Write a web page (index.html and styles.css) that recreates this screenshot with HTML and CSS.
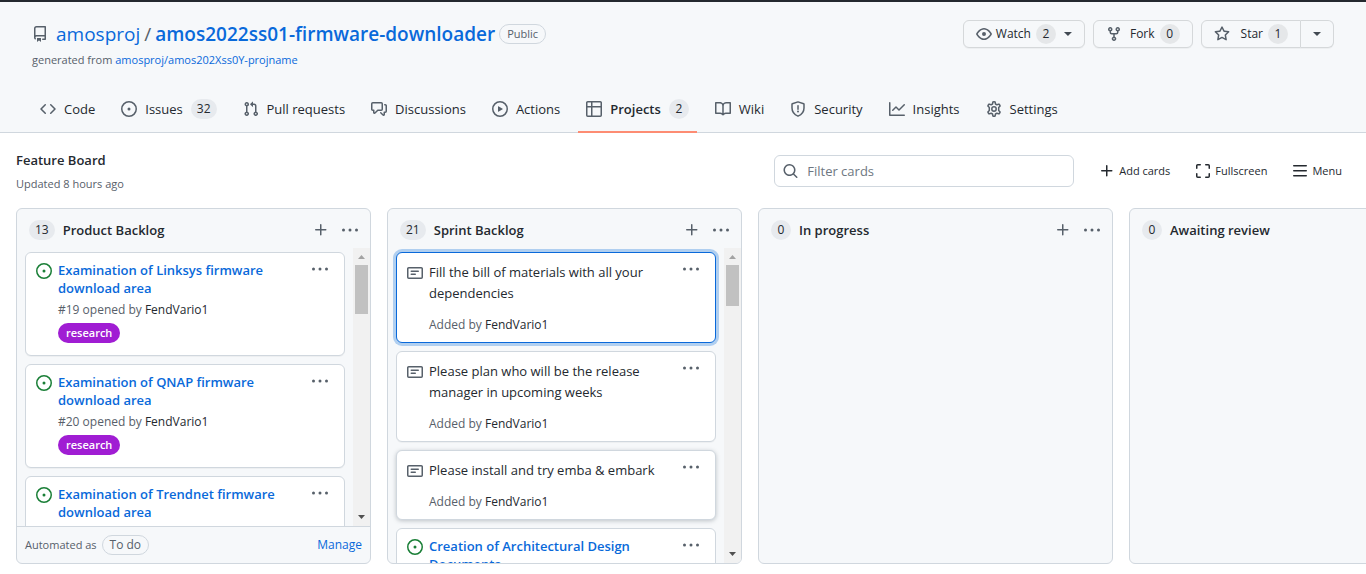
FILE: index.html
```html
<!DOCTYPE html>
<html lang="en">
<head>
<meta charset="utf-8">
<title>Feature Board</title>
<link rel="stylesheet" href="styles.css">
</head>
<body>
<svg class="sprite" aria-hidden="true">
  <symbol id="repo" viewBox="0 0 16 16"><path fill-rule="evenodd" d="M2 2.5A2.5 2.5 0 014.5 0h8.75a.75.75 0 01.75.75v12.5a.75.75 0 01-.75.75h-2.5a.75.75 0 110-1.5h1.75v-2h-8a1 1 0 00-.714 1.7.75.75 0 01-1.072 1.05A2.495 2.495 0 012 11.5v-9zm10.5-1V9h-8c-.356 0-.694.074-1 .208V2.5a1 1 0 011-1h8zM5 12.25v3.25a.25.25 0 00.4.2l1.45-1.087a.25.25 0 01.3 0L8.6 15.7a.25.25 0 00.4-.2v-3.25a.25.25 0 00-.25-.25h-3.5a.25.25 0 00-.25.25z"/></symbol>
  <symbol id="eye" viewBox="0 0 16 16"><path fill-rule="evenodd" d="M1.679 7.932c.412-.621 1.242-1.75 2.366-2.717C5.175 4.242 6.527 3.5 8 3.5c1.473 0 2.824.742 3.955 1.715 1.124.967 1.954 2.096 2.366 2.717a.119.119 0 010 .136c-.412.621-1.242 1.75-2.366 2.717C10.825 11.758 9.473 12.5 8 12.5c-1.473 0-2.824-.742-3.955-1.715C2.92 9.818 2.09 8.69 1.679 8.068a.119.119 0 010-.136zM8 2c-1.981 0-3.67.992-4.933 2.078C1.797 5.169.88 6.423.43 7.1a1.619 1.619 0 000 1.798c.45.678 1.367 1.932 2.637 3.024C4.329 13.008 6.019 14 8 14c1.981 0 3.67-.992 4.933-2.078 1.27-1.091 2.187-2.345 2.637-3.023a1.619 1.619 0 000-1.798c-.45-.678-1.367-1.932-2.637-3.023C11.671 2.992 9.981 2 8 2zm0 8a2 2 0 100-4 2 2 0 000 4z"/></symbol>
  <symbol id="fork" viewBox="0 0 16 16"><path fill-rule="evenodd" d="M5 3.25a.75.75 0 11-1.5 0 .75.75 0 011.5 0zm0 2.122a2.25 2.25 0 10-1.5 0v.878A2.25 2.25 0 005.75 8.5h1.5v2.128a2.251 2.251 0 101.5 0V8.5h1.5a2.25 2.25 0 002.25-2.25v-.878a2.25 2.25 0 10-1.5 0v.878a.75.75 0 01-.75.75h-4.5A.75.75 0 015 6.25v-.878zm3.75 7.378a.75.75 0 11-1.5 0 .75.75 0 011.5 0zm3-8.75a.75.75 0 100-1.5.75.75 0 000 1.5z"/></symbol>
  <symbol id="star" viewBox="0 0 16 16"><path fill-rule="evenodd" d="M8 .25a.75.75 0 01.673.418l1.882 3.815 4.21.612a.75.75 0 01.416 1.279l-3.046 2.97.719 4.192a.75.75 0 01-1.088.791L8 12.347l-3.766 1.98a.75.75 0 01-1.088-.79l.72-4.194L.818 6.374a.75.75 0 01.416-1.28l4.21-.611L7.327.668A.75.75 0 018 .25zm0 2.445L6.615 5.5a.75.75 0 01-.564.41l-3.097.45 2.24 2.184a.75.75 0 01.216.664l-.528 3.084 2.769-1.456a.75.75 0 01.698 0l2.77 1.456-.53-3.084a.75.75 0 01.216-.664l2.24-2.183-3.096-.45a.75.75 0 01-.564-.41L8 2.694v.001z"/></symbol>
  <symbol id="code" viewBox="0 0 16 16"><path fill-rule="evenodd" d="M4.72 3.22a.75.75 0 011.06 1.06L2.06 8l3.72 3.72a.75.75 0 11-1.06 1.06L.47 8.53a.75.75 0 010-1.06l4.25-4.25zm6.56 0a.75.75 0 10-1.06 1.06L13.94 8l-3.72 3.72a.75.75 0 101.06 1.06l4.25-4.25a.75.75 0 000-1.06l-4.25-4.25z"/></symbol>
  <symbol id="issue" viewBox="0 0 16 16"><path d="M8 9.5a1.5 1.5 0 100-3 1.5 1.5 0 000 3z"/><path fill-rule="evenodd" d="M8 0a8 8 0 100 16A8 8 0 008 0zM1.5 8a6.5 6.5 0 1113 0 6.5 6.5 0 01-13 0z"/></symbol>
  <symbol id="pull" viewBox="0 0 16 16"><path fill-rule="evenodd" d="M7.177 3.073L9.573.677A.25.25 0 0110 .854v4.792a.25.25 0 01-.427.177L7.177 3.427a.25.25 0 010-.354zM3.75 2.5a.75.75 0 100 1.5.75.75 0 000-1.5zm-2.25.75a2.25 2.25 0 113 2.122v5.256a2.251 2.251 0 11-1.5 0V5.372A2.25 2.25 0 011.5 3.25zM11 2.5h-1V4h1a1 1 0 011 1v5.628a2.251 2.251 0 101.5 0V5A2.5 2.5 0 0011 2.5zm1 10.25a.75.75 0 111.5 0 .75.75 0 01-1.5 0zM3.75 12a.75.75 0 100 1.5.75.75 0 000-1.5z"/></symbol>
  <symbol id="discussion" viewBox="0 0 16 16"><path fill-rule="evenodd" d="M1.5 2.75a.25.25 0 01.25-.25h8.5a.25.25 0 01.25.25v5.5a.25.25 0 01-.25.25h-3.5a.75.75 0 00-.53.22L3.5 11.44V9.25a.75.75 0 00-.75-.75h-1a.25.25 0 01-.25-.25v-5.5zM1.75 1A1.75 1.75 0 000 2.75v5.5C0 9.216.784 10 1.75 10H2v1.543a1.457 1.457 0 002.487 1.03L7.061 10h3.189A1.75 1.75 0 0012 8.25v-5.5A1.75 1.75 0 0010.25 1h-8.5zM14.5 4.75a.25.25 0 00-.25-.25h-.5a.75.75 0 110-1.5h.5c.966 0 1.75.784 1.75 1.75v5.5A1.75 1.75 0 0114.25 12H14v1.543a1.457 1.457 0 01-2.487 1.03L9.22 12.28a.75.75 0 111.06-1.06l2.22 2.22v-2.19a.75.75 0 01.75-.75h1a.25.25 0 00.25-.25v-5.5z"/></symbol>
  <symbol id="play" viewBox="0 0 16 16"><path fill-rule="evenodd" d="M1.5 8a6.5 6.5 0 1113 0 6.5 6.5 0 01-13 0zM8 0a8 8 0 100 16A8 8 0 008 0zM6.379 5.227A.25.25 0 006 5.442v5.117a.25.25 0 00.379.214l4.264-2.559a.25.25 0 000-.428L6.379 5.227z"/></symbol>
  <symbol id="table" viewBox="0 0 16 16"><path fill-rule="evenodd" d="M0 1.75C0 .784.784 0 1.75 0h12.5C15.216 0 16 .784 16 1.75v12.5A1.75 1.75 0 0114.25 16H1.75A1.75 1.75 0 010 14.25V1.75zM1.5 6.5v7.75c0 .138.112.25.25.25H5v-8H1.500zM5 5H1.5V1.75a.25.25 0 01.25-.25H5V5zm1.500 1.500v8h7.750a.25.25 0 00.25-.25V6.500h-8zm8-1.500h-8V1.500h7.750a.25.25 0 01.25.25V5z"/></symbol>
  <symbol id="book" viewBox="0 0 16 16"><path fill-rule="evenodd" d="M0 1.75A.75.75 0 01.75 1h4.253c1.227 0 2.317.59 3 1.501A3.744 3.744 0 0111.006 1h4.245a.75.75 0 01.75.75v10.5a.75.75 0 01-.75.75h-4.507a2.25 2.25 0 00-1.591.659l-.622.621a.75.75 0 01-1.06 0l-.622-.621A2.25 2.25 0 005.258 13H.75a.75.75 0 01-.75-.75V1.750zm8.755 3a2.25 2.25 0 012.25-2.25H14.500v9h-3.757c-.71 0-1.400.201-1.992.572l.004-7.322zm-1.504 7.324l.004-5.073-.002-2.253A2.250 2.250 0 005.003 2.500H1.500v9h3.757a3.750 3.750 0 011.994.574z"/></symbol>
  <symbol id="shield" viewBox="0 0 16 16"><path fill="none" stroke="currentColor" stroke-width="1.500" stroke-linejoin="round" d="M8 .9l5.700 1.850a.5.5 0 01.3.500V7c0 3.700-2 6.500-6 8.150C4 13.500 2 10.700 2 7V3.250a.5.5 0 01.3-.500z"/><path fill="none" stroke="currentColor" stroke-width="1.500" stroke-linecap="round" d="M8 4.750v3.500"/><circle cx="8" cy="10.500" r="1"/></symbol>
  <symbol id="graph" viewBox="0 0 16 16"><path fill-rule="evenodd" d="M1.500 1.750a.75.75 0 00-1.500 0v12.500c0 .414.336.75.75.75h14.500a.75.75 0 000-1.500H1.500V1.750zm14.280 2.530a.75.75 0 00-1.060-1.060L10 7.940 7.530 5.470a.75.75 0 00-1.060 0L3.220 8.720a.75.75 0 001.060 1.060L7 7.060l2.470 2.470a.75.75 0 001.060 0l5.250-5.250z"/></symbol>
  <symbol id="gear" viewBox="0 0 16 16"><path fill="none" stroke="currentColor" stroke-width="1.500" stroke-linejoin="round" d="M6.900 1Q8 .6 9.100 1L9.500 3 10.900 3.800 12.900 3.100Q13.800 3.900 14.100 5L12.700 6.500V9.500L14.100 11Q13.800 12.100 12.900 12.900L10.900 12.200 9.500 13 9.100 15Q8 15.400 6.900 15L6.500 13 5.100 12.200 3.100 12.900Q2.200 12.100 1.900 11L3.300 9.500V6.500L1.900 5Q2.200 3.900 3.100 3.100L5.100 3.800 6.500 3z"/><circle cx="8" cy="8" r="2.200" fill="none" stroke="currentColor" stroke-width="1.500"/></symbol>
  <symbol id="note" viewBox="0 0 16 16"><path fill-rule="evenodd" d="M0 3.750C0 2.784.784 2 1.750 2h12.500c.966 0 1.750.784 1.750 1.750v8.500A1.750 1.750 0 0114.250 14H1.750A1.750 1.750 0 010 12.250v-8.500zm1.750-.25a.25.25 0 00-.25.25v8.500c0 .138.112.25.25.25h12.500a.25.25 0 00.25-.25v-8.500a.25.25 0 00-.25-.25H1.750zM3.500 6.250a.75.75 0 01.75-.75h7a.75.75 0 010 1.500h-7a.75.75 0 01-.75-.75zm.75 2.250a.75.75 0 000 1.500h4a.75.75 0 000-1.500h-4z"/></symbol>
  <symbol id="plus" viewBox="0 0 16 16"><path fill-rule="evenodd" d="M7.750 2a.75.75 0 01.75.75V7h4.250a.75.75 0 110 1.500H8.500v4.250a.75.75 0 11-1.500 0V8.500H2.750a.75.75 0 010-1.500H7V2.750A.75.75 0 017.750 2z"/></symbol>
  <symbol id="dots" viewBox="0 0 16 16"><circle cx="1.500" cy="8" r="1.500"/><circle cx="8" cy="8" r="1.500"/><circle cx="14.500" cy="8" r="1.500"/></symbol>
  <symbol id="search" viewBox="0 0 16 16"><path fill-rule="evenodd" d="M11.500 7a4.499 4.499 0 11-8.998 0A4.499 4.499 0 0111.500 7zm-.820 4.740a6 6 0 111.060-1.060l3.040 3.040a.75.75 0 11-1.060 1.060l-3.040-3.040z" transform="translate(-.5 0)"/></symbol>
  <symbol id="full" viewBox="0 0 16 16"><path fill="none" stroke="currentColor" stroke-width="1.500" stroke-linecap="round" d="M1.750 5.250V2.750a1 1 0 011-1h2.500M10.750 1.750h2.500a1 1 0 011 1v2.500M14.250 10.750v2.500a1 1 0 01-1 1h-2.500M5.250 14.250h-2.500a1 1 0 01-1-1v-2.500"/></symbol>
  <symbol id="bars" viewBox="0 0 16 16"><path fill="none" stroke="currentColor" stroke-width="1.500" stroke-linecap="round" d="M1.750 2.750h12.500M1.750 7.750h12.500M1.750 12.750h12.500"/></symbol>
</svg>

<header class="repo-header">
  <div class="repo-top">
    <div class="repo-name">
      <h1 class="repo-title">
        <svg class="icon"><use href="#repo"/></svg>
        <a href="#">amosproj</a><span class="slash">/</span><a class="strong" href="#">amos2022ss01-firmware-downloader</a>
        <span class="pill">Public</span>
      </h1>
      <p class="generated">generated from <a href="#">amosproj/amos202Xss0Y-projname</a></p>
    </div>
    <div class="repo-actions">
      <button class="btn watch"><svg class="icon"><use href="#eye"/></svg>Watch<span class="count">2</span><span class="caret"></span></button>
      <button class="btn"><svg class="icon"><use href="#fork"/></svg>Fork<span class="count">0</span></button>
      <div class="btn-group">
        <button class="btn"><svg class="icon"><use href="#star"/></svg>Star<span class="count">1</span></button>
        <button class="btn" aria-label="Star lists"><span class="caret"></span></button>
      </div>
    </div>
  </div>
  <nav class="tabs">
    <a class="tab" href="#"><svg class="icon"><use href="#code"/></svg>Code</a>
    <a class="tab" href="#"><svg class="icon"><use href="#issue"/></svg>Issues<span class="count">32</span></a>
    <a class="tab" href="#"><svg class="icon"><use href="#pull"/></svg>Pull requests</a>
    <a class="tab" href="#"><svg class="icon"><use href="#discussion"/></svg>Discussions</a>
    <a class="tab" href="#"><svg class="icon"><use href="#play"/></svg>Actions</a>
    <a class="tab selected" href="#"><svg class="icon"><use href="#table"/></svg>Projects<span class="count">2</span></a>
    <a class="tab" href="#"><svg class="icon"><use href="#book"/></svg>Wiki</a>
    <a class="tab" href="#"><svg class="icon"><use href="#shield"/></svg>Security</a>
    <a class="tab" href="#"><svg class="icon"><use href="#graph"/></svg>Insights</a>
    <a class="tab" href="#"><svg class="icon"><use href="#gear"/></svg>Settings</a>
  </nav>
</header>

<div class="project-bar">
  <div class="project-name">
    <h2>Feature Board</h2>
    <p>Updated 8 hours ago</p>
  </div>
  <div class="project-tools">
    <label class="filter"><svg class="icon"><use href="#search"/></svg><input type="text" placeholder="Filter cards" aria-label="Filter cards"></label>
    <button class="tool"><svg class="icon"><use href="#plus"/></svg>Add cards</button>
    <button class="tool"><svg class="icon"><use href="#full"/></svg>Fullscreen</button>
    <button class="tool"><svg class="icon"><use href="#bars"/></svg>Menu</button>
  </div>
</div>

<main class="board">
  <section class="column">
    <div class="column-head"><span class="count">13</span><h3>Product Backlog</h3>
      <button class="icon-btn" aria-label="Add a note"><svg class="icon"><use href="#plus"/></svg></button><button class="icon-btn" aria-label="Column menu"><svg class="icon"><use href="#dots"/></svg></button></div>
    <div class="column-body">
      <div class="cards">
        <article class="card"><svg class="icon open"><use href="#issue"/></svg>
          <div class="card-text"><a class="issue-title" href="#">Examination of Linksys firmware download area</a><p class="meta">#19 opened by <a href="#">FendVario1</a></p><a class="label" href="#">research</a></div>
          <button class="icon-btn" aria-label="Card menu"><svg class="icon"><use href="#dots"/></svg></button></article>
        <article class="card"><svg class="icon open"><use href="#issue"/></svg>
          <div class="card-text"><a class="issue-title" href="#">Examination of QNAP firmware download area</a><p class="meta">#20 opened by <a href="#">FendVario1</a></p><a class="label" href="#">research</a></div>
          <button class="icon-btn" aria-label="Card menu"><svg class="icon"><use href="#dots"/></svg></button></article>
        <article class="card last"><svg class="icon open"><use href="#issue"/></svg>
          <div class="card-text"><a class="issue-title" href="#">Examination of Trendnet firmware download area</a></div>
          <button class="icon-btn" aria-label="Card menu"><svg class="icon"><use href="#dots"/></svg></button></article>
      </div>
      <div class="scrollbar"><span class="arrow up"></span><span class="thumb"></span><span class="arrow down"></span></div>
    </div>
    <div class="column-foot"><span>Automated as</span><span class="pill">To do</span><a href="#">Manage</a></div>
  </section>

  <section class="column">
    <div class="column-head"><span class="count">21</span><h3>Sprint Backlog</h3>
      <button class="icon-btn" aria-label="Add a note"><svg class="icon"><use href="#plus"/></svg></button><button class="icon-btn" aria-label="Column menu"><svg class="icon"><use href="#dots"/></svg></button></div>
    <div class="column-body">
      <div class="cards">
        <article class="card note focused"><svg class="icon"><use href="#note"/></svg>
          <div class="card-text"><p class="note-text">Fill the bill of materials with all your dependencies</p><p class="meta">Added by <a href="#">FendVario1</a></p></div>
          <button class="icon-btn" aria-label="Card menu"><svg class="icon"><use href="#dots"/></svg></button></article>
        <article class="card note"><svg class="icon"><use href="#note"/></svg>
          <div class="card-text"><p class="note-text">Please plan who will be the release manager in upcoming weeks</p><p class="meta">Added by <a href="#">FendVario1</a></p></div>
          <button class="icon-btn" aria-label="Card menu"><svg class="icon"><use href="#dots"/></svg></button></article>
        <article class="card note hovered"><svg class="icon"><use href="#note"/></svg>
          <div class="card-text"><p class="note-text">Please install and try emba &amp; embark</p><p class="meta">Added by <a href="#">FendVario1</a></p></div>
          <button class="icon-btn" aria-label="Card menu"><svg class="icon"><use href="#dots"/></svg></button></article>
        <article class="card last"><svg class="icon open"><use href="#issue"/></svg>
          <div class="card-text"><a class="issue-title" href="#">Creation of Architectural Design Documents</a></div>
          <button class="icon-btn" aria-label="Card menu"><svg class="icon"><use href="#dots"/></svg></button></article>
      </div>
      <div class="scrollbar"><span class="arrow up"></span><span class="thumb short"></span><span class="arrow down"></span></div>
    </div>
  </section>

  <section class="column">
    <div class="column-head"><span class="count">0</span><h3>In progress</h3>
      <button class="icon-btn" aria-label="Add a note"><svg class="icon"><use href="#plus"/></svg></button><button class="icon-btn" aria-label="Column menu"><svg class="icon"><use href="#dots"/></svg></button></div>
  </section>

  <section class="column">
    <div class="column-head"><span class="count">0</span><h3>Awaiting review</h3></div>
  </section>
</main>
</body>
</html>
```
FILE: styles.css
```css
* { box-sizing: border-box; }
body {
  margin: 0;
  height: 100vh;
  display: flex;
  flex-direction: column;
  overflow: hidden;
  border-top: 2px solid #24292f;
  background: #fff;
  color: #24292f;
  font: 13px/20px "Open Sans", "Noto Sans", sans-serif;
}
h1, h2, h3, p { margin: 0; font: inherit; }
a { color: #0969da; text-decoration: none; }
button { font: inherit; color: inherit; cursor: pointer; }
.sprite { display: none; }
.icon { width: 16px; height: 16px; flex: none; fill: currentColor; color: #57606a; }

.count {
  min-width: 20px;
  height: 20px;
  padding: 0 6px;
  border-radius: 10px;
  background: #e7eaee;
  font-size: 12px;
  font-weight: 500;
  text-align: center;
}
.pill {
  padding: 0 7px;
  border: 1px solid #d0d7de;
  border-radius: 10px;
  color: #57606a;
  font-size: 11px;
  font-weight: 500;
  line-height: 18px;
}
.caret {
  width: 8px;
  height: 4px;
  background: #424a53;
  clip-path: polygon(0 0, 100% 0, 50% 100%);
}

.repo-header { background: #f6f8fa; border-bottom: 1px solid #d0d7de; }
.repo-top {
  display: flex;
  justify-content: space-between;
  align-items: flex-start;
  padding: 16px 32px 0;
}
.repo-title { display: flex; align-items: center; font-size: 19px; line-height: 32px; }
.repo-title .icon { margin-right: 8px; }
.repo-title .strong { font-weight: 600; }
.repo-title .pill { margin-left: 4px; }
.slash { margin: 0 4px; color: #57606a; }
.generated { color: #57606a; font-size: 11px; line-height: 20px; }
.repo-actions { display: flex; gap: 8px; padding-top: 2px; }
.btn {
  display: flex;
  align-items: center;
  height: 28px;
  padding: 0 12px;
  border: 1px solid #d5d8da;
  border-radius: 6px;
  background: #f6f8fa;
  box-shadow: 0 1px 0 rgba(27, 31, 36, .04);
  font-size: 12px;
  font-weight: 500;
}
.btn .icon { margin-right: 8px; }
.btn .count { margin-left: 5px; background: #e5e7e9; }
.watch .icon { margin-right: 4px; }
.watch .caret { margin-left: 8px; }
.btn-group { display: flex; }
.btn-group .icon { margin-right: 11px; }
.btn-group .btn:first-child { border-radius: 6px 0 0 6px; }
.btn-group .btn:last-child { border-left: 0; border-radius: 0 6px 6px 0; }

.tabs { display: flex; gap: 10px; padding: 16px 32px 0; }
.tab {
  display: flex;
  align-items: center;
  gap: 8px;
  height: 47px;
  margin-bottom: -1px;
  padding: 0 8px;
  border-bottom: 2px solid transparent;
  color: #24292f;
}
.selected { border-color: #fd8c73; font-weight: 600; }

.project-bar {
  display: flex;
  justify-content: space-between;
  padding: 14px 16px 13px;
}
.project-name h2 { font-weight: 600; line-height: 26px; }
.project-name p { color: #57606a; font-size: 11px; line-height: 22px; }
.project-tools { display: flex; align-items: center; padding-right: 8px; gap: 25px; }
.filter {
  display: flex;
  align-items: center;
  gap: 8px;
  width: 300px;
  height: 32px;
  padding: 0 8px;
  border: 1px solid #d0d7de;
  border-radius: 6px;
}
.filter input { flex: 1; min-width: 0; padding: 0; border: 0; outline: 0; background: none; font: inherit; }
.filter input::placeholder { color: #6e7781; }
.tool { display: flex; align-items: center; gap: 4px; padding: 0; border: 0; background: none; font-size: 11px; }
.tool .icon { color: #24292f; }

.board { flex: 1; min-height: 0; display: flex; gap: 16px; padding: 0 16px 10px; }
.column {
  flex: 0 0 355px;
  display: flex;
  flex-direction: column;
  overflow: hidden;
  border: 1px solid #d0d7de;
  border-radius: 6px;
  background: #f6f8fa;
}
.column-head { display: flex; align-items: center; height: 39px; padding: 3px 12px 0; }
.column-head h3 { flex: 1; margin-left: 8px; font-weight: 600; }
.icon-btn { display: flex; padding: 0; border: 0; background: none; }
.column-head .icon-btn { margin-left: 13px; }
.column-body { flex: 1; min-height: 0; display: flex; }
.cards { flex: 1; min-width: 0; overflow: hidden; display: flex; flex-direction: column; gap: 8px; padding: 4px 8px 0; }
.card {
  flex: none;
  display: flex;
  align-items: flex-start;
  padding: 8px 16px 12px 10px;
  border: 1px solid #d0d7de;
  border-radius: 6px;
  background: #fff;
  box-shadow: 0 1px 0 rgba(27, 31, 36, .04);
}
.last { padding-bottom: 40px; }
.card > .icon { margin: 2px 6px 0 0; }
.card > .open { color: #1a7f37; }
.card-text { flex: 1; min-width: 0; padding-right: 20px; }
.issue-title { display: block; font-weight: 600; line-height: 18px; }
.meta { color: #57606a; font-size: 12px; line-height: 20px; }
.card .meta { margin: 3px 0; }
.meta a { color: #24292f; }
.label {
  display: block;
  width: fit-content;
  padding: 0 8px;
  border-radius: 10px;
  background: #a01dd3;
  color: #fff;
  font-size: 11px;
  font-weight: 600;
}
.note { padding-bottom: 4px; }
.note > .icon { margin-top: 4px; }
.note-text { line-height: 21px; }
.note .card-text { padding-top: 1px; }
.note .meta { margin: 11px 0 3px; }
.focused { border-color: #0969da; box-shadow: 0 0 0 3px #b0cff0; }
.hovered { box-shadow: 0 1px 4px rgba(106, 115, 125, .4); }

.scrollbar { width: 17px; display: flex; flex-direction: column; align-items: center; padding: 7px 0; background: #f1f1f1; }
.arrow { width: 7px; height: 4px; background: #505050; clip-path: polygon(0 0, 100% 0, 50% 100%); }
.up { background: #a3a3a3; clip-path: polygon(50% 0, 100% 100%, 0 100%); }
.down { margin-top: auto; }
.thumb { width: 13px; height: 49px; margin-top: 6px; background: #c1c1c1; }
.short { height: 41px; }

.column-foot {
  display: flex;
  align-items: center;
  gap: 5px;
  height: 37px;
  padding: 0 8px;
  border-top: 1px solid #d0d7de;
  color: #57606a;
  font-size: 11px;
}
.column-foot .pill,
.column-foot a { font-size: 12px; }
.column-foot a { margin-left: auto; }
```
